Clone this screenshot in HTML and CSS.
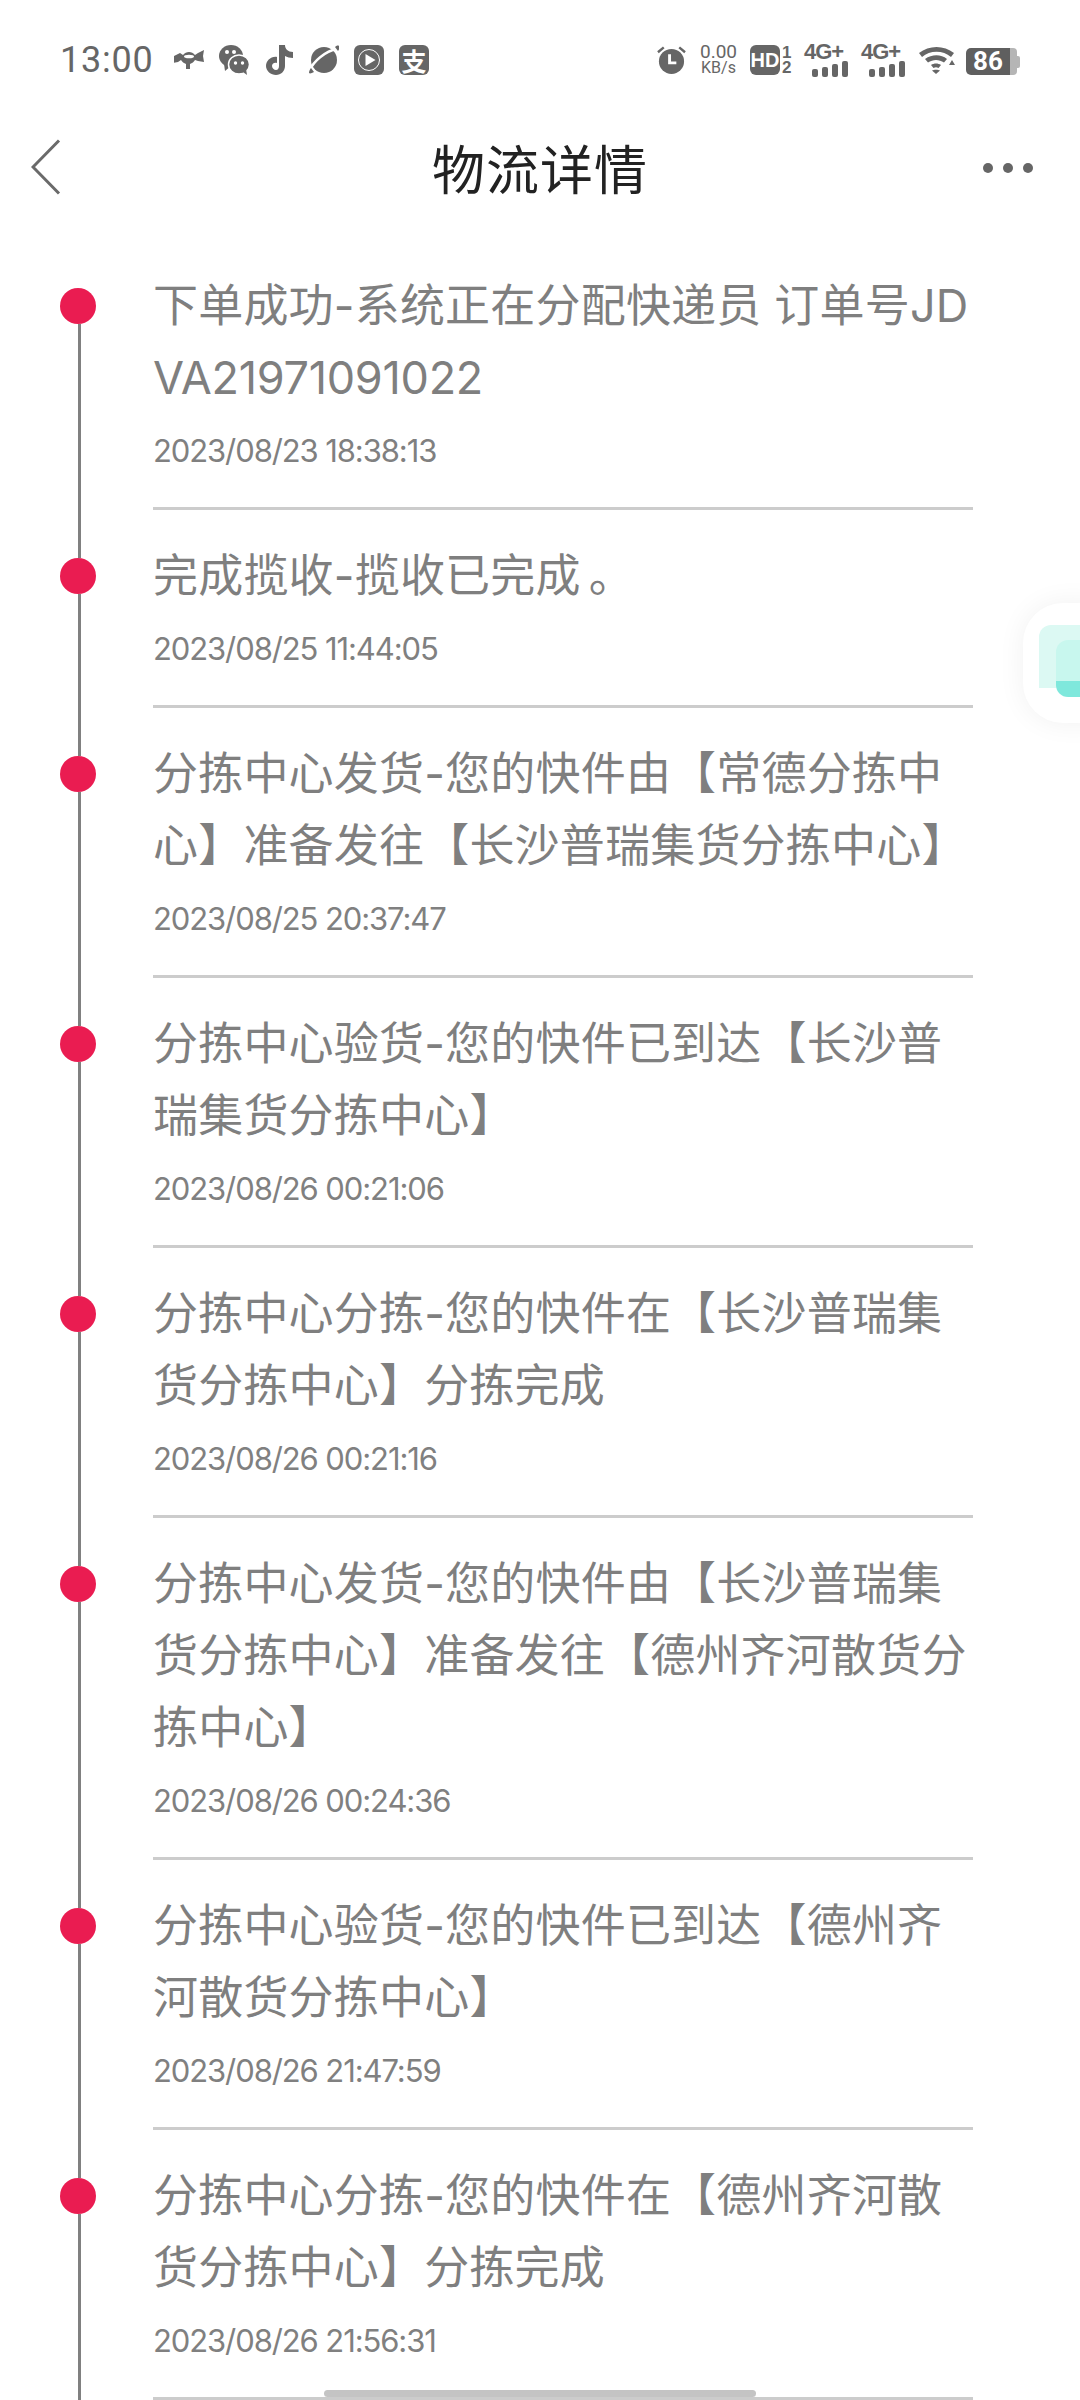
FILE: index.html
```html
<!DOCTYPE html>
<html lang="zh-CN">
<head>
  <meta charset="UTF-8">
  <meta name="viewport" content="width=device-width, initial-scale=1.0">
  <title>物流详情</title>
  <link rel="stylesheet" href="styles.css">
</head>
<body>
  <div class="page">
    <div class="statusbar">
      <div class="status-left">
        <span class="clock">13:00</span>
        <svg class="app-icon" viewBox="0 0 30 30"><path d="M0 11l6-3 3 2c3-4 9-4 12 0l3-2 6-3-1 6 1 6-6-1-3-1c-1 2-3 3-5 4v5h-4v-5c-2-1-4-2-5-4l-3 2-5 1 1-4z" fill="#666"/><ellipse cx="15" cy="11.500" rx="5" ry="1.800" fill="#fff"/></svg>
        <svg class="app-icon" viewBox="0 0 30 30"><ellipse cx="12" cy="11" rx="12" ry="11" fill="#666"/><path d="M5 19l1 7 6-5z" fill="#666"/><circle cx="8" cy="7" r="2" fill="#fff"/><circle cx="15" cy="7" r="2" fill="#fff"/><ellipse cx="20" cy="19.500" rx="10.500" ry="9.500" fill="#666" stroke="#fff" stroke-width="1.500"/><path d="M24 27l4 3-1-6z" fill="#666"/><circle cx="16.500" cy="18" r="1.700" fill="#fff"/><circle cx="23.500" cy="18" r="1.700" fill="#fff"/></svg>
        <svg class="app-icon" viewBox="0 0 30 30"><path d="M15 0h6c0 4 3 7 8 7v6c-3 0-6-1-8-2v10c0 5-4 9-9 9s-10-4-10-9 5-10 11-9v6c-3-1-5 1-5 3 0 2 2 4 4 4s3-2 3-4z" fill="#666"/></svg>
        <svg class="app-icon" viewBox="0 0 30 30"><circle cx="15" cy="15" r="13" fill="#666"/><path d="M1 25C4 17 16 6 28 4" fill="none" stroke="#fff" stroke-width="2.400"/><path d="M0 28c0-2 1-4 2-5l3 4c-2 1-4 2-5 1zM30 1c1 1 0 4-1 5l-3-4c1-1 3-2 4-1z" fill="#666"/></svg>
        <svg class="app-icon" viewBox="0 0 30 30"><rect width="30" height="30" rx="6" fill="#666"/><circle cx="15" cy="15" r="10.500" fill="none" stroke="#fff" stroke-width="1"/><path d="M11.500 9l10 6-10 6z" fill="#fff"/></svg>
        <span class="alipay">支</span>
      </div>
      <div class="status-right">
        <svg class="alarm" viewBox="0 0 30 30"><circle cx="15" cy="16.500" r="13" fill="#666"/><path d="M1 7l6-5M29 7l-6-5" stroke="#666" stroke-width="2.500"/><path d="M13 9v9h7" fill="none" stroke="#fff" stroke-width="3"/></svg>
        <span class="speed"><span>0.00</span><span class="speed-unit">KB/s</span></span>
        <span class="hd">HD</span>
        <span class="sim-nums"><span>1</span><span>2</span></span>
        <span class="signal">
          <span class="net">4G+</span>
          <span class="bars"><i class="b1"></i><i class="b2"></i><i class="b3"></i><i class="b4"></i></span>
        </span>
        <span class="signal">
          <span class="net">4G+</span>
          <span class="bars"><i class="b1"></i><i class="b2"></i><i class="b3"></i><i class="b4"></i></span>
        </span>
        <svg class="wifi" viewBox="0 0 37 28"><path d="M1 7c10-8 25-8 35 0l-3 4c-8-7-21-7-29 0z" fill="#666"/><path d="M7 13c7-5 16-5 22 0l-3 3.500c-5-3.500-11-3.500-16 0z" fill="#666"/><path d="M13 19c3-2 7-2 10 0l-2.500 3c-2-1-3-1-5 0z" fill="#666"/><path d="M18 28l-4-3.500c2-1 6-1 8 0z" fill="#666"/><path d="M31 19l6 0-3-5z" fill="#666"/></svg>
        <span class="battery"><span class="battery-level">86</span><span class="battery-rest"></span><span class="battery-cap"></span></span>
      </div>
    </div>

    <div class="navbar">
      <svg class="back" viewBox="0 0 30 56"><path d="M28 1.500L2 28l26 26.500" fill="none" stroke="#6a6a6a" stroke-width="3"/></svg>
      <h1>物流详情</h1>
      <div class="more"><i></i><i></i><i></i></div>
    </div>

    <ul class="timeline">
      <li class="step">
        <div class="rail"><span class="dot"></span><span class="line"></span></div>
        <div class="step-body">
          <p class="step-title">下单成功-系统正在分配快递员 订单号JD<br><span class="order-no">VA21971091022</span></p>
          <p class="step-time">2023/08/23 18:38:13</p>
        </div>
      </li>
      <li class="step">
        <div class="rail"><span class="dot"></span><span class="line"></span></div>
        <div class="step-body">
          <p class="step-title">完成揽收-揽收已完成<span class="stop">。</span></p>
          <p class="step-time">2023/08/25 11:44:05</p>
        </div>
      </li>
      <li class="step">
        <div class="rail"><span class="dot"></span><span class="line"></span></div>
        <div class="step-body">
          <p class="step-title">分拣中心发货-您的快件由【常德分拣中<br>心】准备发往【长沙普瑞集货分拣中心】</p>
          <p class="step-time">2023/08/25 20:37:47</p>
        </div>
      </li>
      <li class="step">
        <div class="rail"><span class="dot"></span><span class="line"></span></div>
        <div class="step-body">
          <p class="step-title">分拣中心验货-您的快件已到达【长沙普<br>瑞集货分拣中心】</p>
          <p class="step-time">2023/08/26 00:21:06</p>
        </div>
      </li>
      <li class="step">
        <div class="rail"><span class="dot"></span><span class="line"></span></div>
        <div class="step-body">
          <p class="step-title">分拣中心分拣-您的快件在【长沙普瑞集<br>货分拣中心】分拣完成</p>
          <p class="step-time">2023/08/26 00:21:16</p>
        </div>
      </li>
      <li class="step">
        <div class="rail"><span class="dot"></span><span class="line"></span></div>
        <div class="step-body">
          <p class="step-title">分拣中心发货-您的快件由【长沙普瑞集<br>货分拣中心】准备发往【德州齐河散货分<br>拣中心】</p>
          <p class="step-time">2023/08/26 00:24:36</p>
        </div>
      </li>
      <li class="step">
        <div class="rail"><span class="dot"></span><span class="line"></span></div>
        <div class="step-body">
          <p class="step-title">分拣中心验货-您的快件已到达【德州齐<br>河散货分拣中心】</p>
          <p class="step-time">2023/08/26 21:47:59</p>
        </div>
      </li>
      <li class="step">
        <div class="rail"><span class="dot"></span><span class="line"></span></div>
        <div class="step-body">
          <p class="step-title">分拣中心分拣-您的快件在【德州齐河散<br>货分拣中心】分拣完成</p>
          <p class="step-time">2023/08/26 21:56:31</p>
        </div>
      </li>
    </ul>

    <div class="float-btn"><span class="bubble-back"></span><span class="bubble-front"></span></div>
    <div class="home-bar"></div>
  </div>
</body>
</html>
```

FILE: styles.css
```css
* {
  box-sizing: border-box;
}
body {
  margin: 0;
  background: #fff;
  font-family: "Noto Sans CJK SC", "Noto Sans", sans-serif;
}
.page {
  position: relative;
  width: 1080px;
  height: 2400px;
  overflow: hidden;
  background: #fff;
}

/* status bar */
.statusbar {
  display: flex;
  justify-content: space-between;
  align-items: center;
  height: 60px;
  margin-top: 30px;
  padding: 0 60px;
  color: #666;
}
.status-left,
.status-right {
  display: flex;
  align-items: center;
}
.clock {
  width: 114px;
  font-family: Roboto, sans-serif;
  font-size: 36px;
  letter-spacing: 0.8px;
  color: #666;
}
.app-icon {
  width: 30px;
  height: 30px;
  margin-right: 15px;
}
.alipay {
  display: flex;
  align-items: center;
  justify-content: center;
  width: 30px;
  height: 30px;
  border-radius: 6px;
  background: #666;
  color: #fff;
  font-size: 25px;
  font-weight: 700;
  line-height: 30px;
}
.alarm {
  width: 29px;
  height: 30px;
  margin-right: 14px;
}
.speed {
  display: flex;
  flex-direction: column;
  align-items: center;
  width: 37px;
  margin-right: 13px;
  font-family: Roboto, sans-serif;
  font-size: 19px;
  line-height: 16px;
}
.speed-unit {
  font-size: 16px;
}
.hd {
  width: 30px;
  height: 30px;
  border-radius: 6px;
  background: #666;
  color: #fff;
  font-family: "Liberation Sans", sans-serif;
  font-size: 20px;
  font-weight: 700;
  line-height: 30px;
  text-align: center;
}
.sim-nums {
  display: flex;
  flex-direction: column;
  width: 10px;
  margin-left: 2px;
  margin-right: 12px;
  font-family: "Liberation Sans", sans-serif;
  font-size: 17px;
  font-weight: 700;
  line-height: 15px;
}
.signal {
  display: flex;
  flex-direction: column;
  width: 44px;
  margin-right: 13px;
}
.net {
  height: 16px;
  font-family: "Liberation Sans", sans-serif;
  font-size: 22px;
  font-weight: 700;
  line-height: 16px;
  letter-spacing: -1px;
  white-space: nowrap;
}
.bars {
  display: flex;
  align-items: flex-end;
  justify-content: flex-end;
  gap: 4px;
  height: 17px;
}
.bars i {
  width: 6px;
  border-radius: 2px;
  background: #666;
}
.b1 { height: 8px; }
.b2 { height: 10px; }
.b3 { height: 13px; }
.b4 { height: 16px; }
.wifi {
  width: 37px;
  height: 28px;
  margin-right: 11px;
}
.battery {
  display: flex;
  align-items: center;
  width: 54px;
  height: 27px;
  margin-top: 3px;
}
.battery-level {
  width: 44px;
  height: 27px;
  border-radius: 5px 0 0 5px;
  background: #5f5f5f;
  color: #fff;
  font-family: Roboto, sans-serif;
  font-size: 26px;
  font-weight: 700;
  line-height: 27px;
  text-align: center;
}
.battery-rest {
  width: 7px;
  height: 27px;
  border-radius: 0 4px 4px 0;
  background: #b5b5b5;
}
.battery-cap {
  width: 3px;
  height: 12px;
  border-radius: 0 2px 2px 0;
  background: #b5b5b5;
}

/* nav */
.navbar {
  position: relative;
  display: flex;
  align-items: center;
  justify-content: center;
  height: 150px;
}
.navbar h1 {
  margin: 4px 0 0;
  color: #222;
  font-size: 53px;
  font-weight: 400;
  line-height: 72px;
  letter-spacing: 1px;
}
.back {
  position: absolute;
  left: 31px;
  top: 49px;
  width: 30px;
  height: 56px;
}
.more {
  position: absolute;
  right: 47px;
  top: 73px;
  display: flex;
  gap: 10px;
}
.more i {
  width: 10px;
  height: 10px;
  border-radius: 50%;
  background: #666;
}

/* timeline */
.timeline {
  margin: 0;
  padding: 0;
  list-style: none;
}
.step {
  display: flex;
}
.rail {
  display: flex;
  flex-direction: column;
  align-items: center;
  width: 153px;
  padding: 48px 0 0 6px;
}
.step + .step .rail {
  padding-top: 0;
}
.step + .step .rail::before {
  content: "";
  flex: none;
  width: 3px;
  height: 48px;
  background: #808080;
}
.dot {
  flex: none;
  width: 36px;
  height: 36px;
  margin-right: 3px;
  border-radius: 50%;
  background: #ea1c51;
}
.line {
  flex: 1;
  width: 3px;
  background: #808080;
}
.step-body {
  width: 820px;
  padding: 30px 0 33px;
  border-bottom: 3px solid #ccc;
}
.step-title {
  margin: 0;
  color: #7f7f7f;
  font-family: Inter, "Noto Sans CJK SC", sans-serif;
  font-size: 45px;
  line-height: 72px;
  letter-spacing: 0.2px;
  white-space: nowrap;
}
.order-no {
  letter-spacing: -0.26px;
}
.stop {
  margin-left: 8px;
}
.step-time {
  margin: 14px 0 0;
  color: #808080;
  font-family: Inter, sans-serif;
  font-size: 31px;
  line-height: 46px;
  letter-spacing: -1.1px;
  white-space: nowrap;
}

/* floating button on the right edge */
.float-btn {
  position: absolute;
  left: 1023px;
  top: 603px;
  width: 100px;
  height: 120px;
  border-radius: 40px;
  background: #fff;
  box-shadow: 0 0 28px rgba(0, 0, 0, 0.06);
}
.bubble-back {
  position: absolute;
  left: 16px;
  top: 22px;
  width: 60px;
  height: 63px;
  border-radius: 12px 12px 12px 0;
  background: #dcf9f3;
}
.bubble-front {
  position: absolute;
  left: 33px;
  top: 37px;
  width: 60px;
  height: 57px;
  border-radius: 12px;
  background: linear-gradient(#c8f7ee 0, #c8f7ee 41px, #7fe8dc 41px);
}

.home-bar {
  position: absolute;
  left: 324px;
  top: 2390px;
  width: 432px;
  height: 7px;
  border-radius: 4px;
  background: #c4c4c4;
}
```
